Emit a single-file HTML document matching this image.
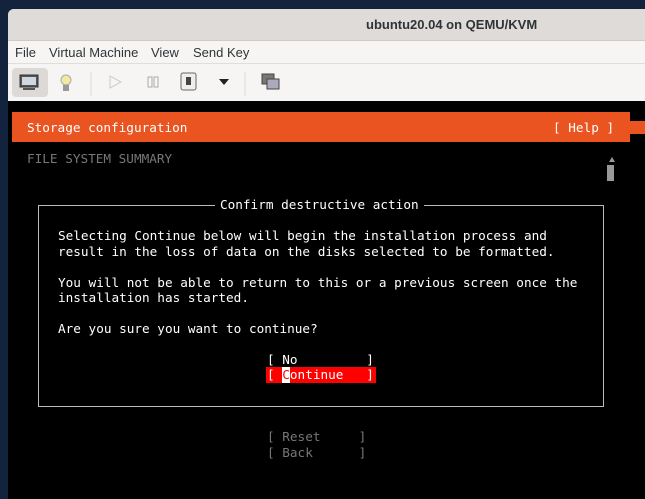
<!DOCTYPE html>
<html><head><style>
*{margin:0;padding:0;box-sizing:border-box}
body{width:645px;height:495px;overflow:hidden;background:#14233d;position:relative;font-family:"Liberation Sans",sans-serif}
.win{position:absolute;left:8px;top:9px;width:645px;height:490px;background:#f6f5f4;border-radius:6px 0 0 0;overflow:hidden}
.title{position:absolute;left:0;top:0;width:100%;height:32px;background:#dedbd8;border-bottom:1px solid #cdc9c5;font-size:13px;font-weight:bold;color:#2e3436}
.title span{position:absolute;left:358px;top:8px}
.menu{position:absolute;top:33px;left:0;width:100%;height:22px;font-size:13px;color:#2e3436;border-bottom:1px solid #e0ddda}
.menu span{position:absolute;top:3px}
.term{position:absolute;left:0;top:92px;width:100%;height:400px;background:#000}
.t{position:absolute;font-family:"DejaVu Sans Mono","Liberation Mono",monospace;font-size:12.7px;white-space:pre;color:#fff;line-height:15.5px}
.g{color:#777}
</style></head><body>
<div class="win">
<div class="title"><span>ubuntu20.04 on QEMU/KVM</span></div>
<div class="menu"><span style="left:7px">File</span><span style="left:41px">Virtual Machine</span><span style="left:143px">View</span><span style="left:185px">Send Key</span></div>
<div style="position:absolute;left:4px;top:59px;width:36px;height:29px;background:#dcd9d6;border-radius:4px"></div>
<svg style="position:absolute;left:0;top:55px" width="300" height="37">
<rect x="12" y="11" width="18" height="12" fill="#555" stroke="#333"/><rect x="14" y="13" width="14" height="8" fill="#cfd8e0"/><rect x="15" y="24" width="12" height="2" fill="#555"/>
<circle cx="58" cy="16" r="5" fill="#f5e9a0" stroke="#aaa"/><rect x="55" y="21" width="6" height="6" fill="#999"/>
<line x1="83" y1="8" x2="83" y2="32" stroke="#ddd"/>
<path d="M102 12 L102 24 L113 18 Z" fill="none" stroke="#ccc"/>
<rect x="140" y="13" width="4" height="10" fill="none" stroke="#aaa"/><rect x="146" y="13" width="4" height="10" fill="none" stroke="#aaa"/>
<rect x="173" y="9" width="15" height="17" rx="2" fill="#eee" stroke="#666"/><rect x="178" y="13" width="5" height="8" fill="#444"/>
<path d="M211 15 L221 15 L216 21 Z" fill="#222"/>
<line x1="237" y1="8" x2="237" y2="32" stroke="#ddd"/>
<rect x="254" y="10" width="12" height="10" fill="#777" stroke="#444"/><rect x="259" y="15" width="12" height="10" fill="#aab" stroke="#444"/>
</svg>
<div class="term"></div>
</div>
<div style="position:absolute;left:12px;top:112px;width:618px;height:30px;background:#e95420"></div>
<div style="position:absolute;left:628px;top:121px;width:17px;height:13px;background:#e95420"></div>
<div class="t" style="left:27px;top:120px">Storage configuration</div>
<div class="t" style="left:553px;top:120px">[ Help ]</div>
<div class="t g" style="left:27px;top:151px">FILE SYSTEM SUMMARY</div>
<div style="position:absolute;left:609px;top:157px;width:0;height:0;border-left:3px solid transparent;border-right:3px solid transparent;border-bottom:5px solid #999"></div>
<div style="position:absolute;left:607px;top:165px;width:7px;height:16px;background:#999"></div>
<div style="position:absolute;left:38px;top:205px;width:566px;height:202px;border:1px solid #bbb"></div>
<div class="t" style="left:215px;top:197px;background:#000;padding:0 5px">Confirm destructive action</div>
<div class="t" style="left:58px;top:228px">Selecting Continue below will begin the installation process and
result in the loss of data on the disks selected to be formatted.

You will not be able to return to this or a previous screen once the
installation has started.

Are you sure you want to continue?</div>
<div class="t" style="left:267px;top:352px">[ No         ]</div>
<div style="position:absolute;left:266px;top:367px;width:110px;height:16px;background:#f00"></div>
<div style="position:absolute;left:282px;top:367px;width:8px;height:16px;background:#fff"></div>
<div class="t" style="left:267px;top:367px">[ <span style="color:#f00">C</span>ontinue   ]</div>
<div class="t g" style="left:267px;top:429px">[ Reset     ]
[ Back      ]</div>
</body></html>
